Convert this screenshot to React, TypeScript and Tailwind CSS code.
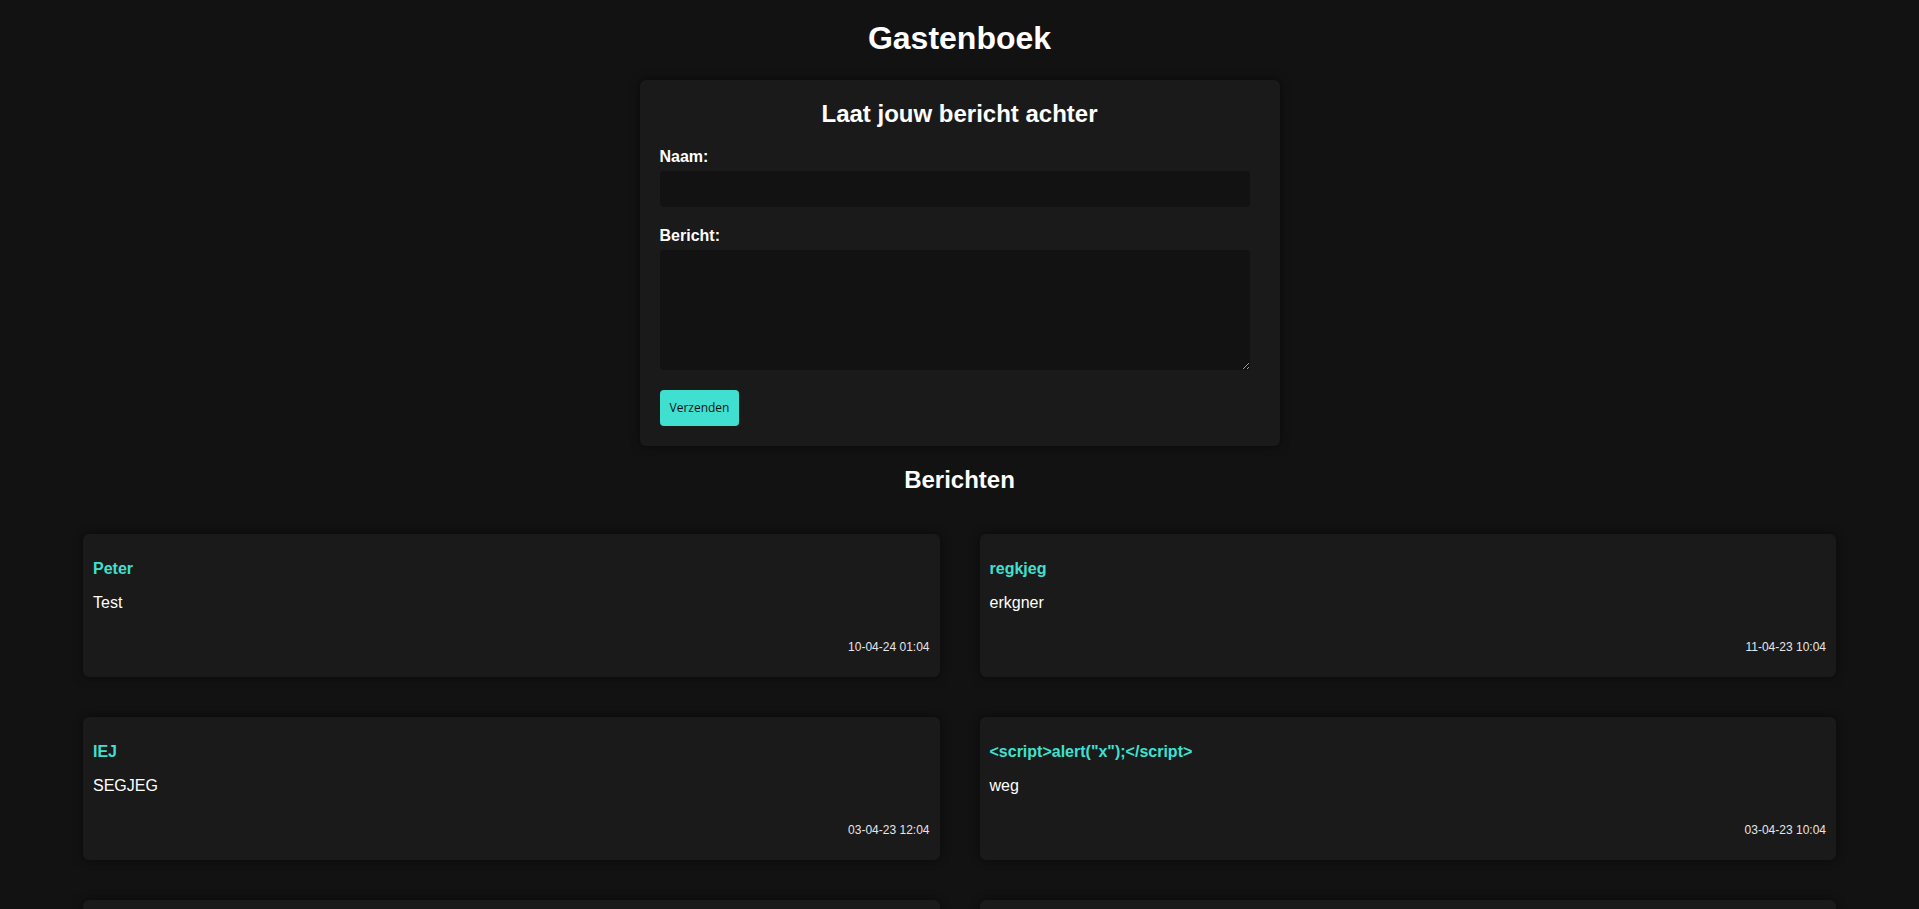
import React from 'react';

const berichten = [
  { naam: 'Peter', tekst: 'Test', datum: '10-04-24 01:04' },
  { naam: 'regkjeg', tekst: 'erkgner', datum: '11-04-23 10:04' },
  { naam: 'IEJ', tekst: 'SEGJEG', datum: '03-04-23 12:04' },
  { naam: '<script>alert("x");</script>', tekst: 'weg', datum: '03-04-23 10:04' },
  { naam: 'Anna', tekst: 'Hallo allemaal', datum: '02-04-23 09:12' },
  { naam: 'Jan', tekst: 'Leuke site!', datum: '01-04-23 18:40' },
  { naam: 'Sanne', tekst: 'Groetjes', datum: '31-03-23 14:22' },
  { naam: 'Tom', tekst: 'Test 123', datum: '30-03-23 11:05' },
];

export default function App() {
  return (
    <div className="min-h-screen bg-[#121212] pb-10 font-['Liberation_Sans',Arial,sans-serif] text-white">
      <h1 className="pt-5 text-center text-[32px] font-bold leading-[37px]">Gastenboek</h1>

      {/* Formulier */}
      <section className="mx-auto mt-[23px] w-[640px] rounded-md bg-[#1a1a1a] p-5 shadow-[0_0_10px_rgba(0,0,0,0.5)]">
        <h2 className="mb-[19px] text-center text-2xl font-bold leading-[28px]">Laat jouw bericht achter</h2>
        <form onSubmit={(e) => e.preventDefault()}>
          <label htmlFor="naam" className="mb-[5px] block text-base font-bold leading-[19px]">Naam:</label>
          <input
            id="naam"
            type="text"
            className="mb-[19px] block h-9 w-[590px] rounded bg-[#121212] px-2 text-white outline-none"
          />
          <label htmlFor="bericht" className="mb-[5px] block text-base font-bold leading-[19px]">Bericht:</label>
          <textarea
            id="bericht"
            className="mb-5 block h-[120px] w-[590px] rounded bg-[#121212] p-2 text-white outline-none"
          />
          <button
            type="submit"
            className="h-9 rounded bg-[#40e0d0] px-[10px] font-['Open_Sans',sans-serif] text-xs text-[#121212]"
          >
            Verzenden
          </button>
        </form>
      </section>

      {/* Berichten */}
      <h2 className="mb-10 mt-5 text-center text-2xl font-bold leading-[28px]">Berichten</h2>
      <div className="grid grid-cols-2 gap-10 px-[83px]">
        {berichten.map((b, i) => (
          <div key={i} className="rounded-md bg-[#1a1a1a] p-2.5 shadow-[0_0_10px_rgba(0,0,0,0.5)]">
            <p className="mt-4 text-base font-bold leading-[18px] text-[#40e0d0]">{b.naam}</p>
            <p className="mt-4 text-base leading-[18px]">{b.tekst}</p>
            <p className="mb-[13px] mt-[28px] text-right text-xs leading-[14px] text-[#e6e6e6]">{b.datum}</p>
          </div>
        ))}
      </div>
    </div>
  );
}
